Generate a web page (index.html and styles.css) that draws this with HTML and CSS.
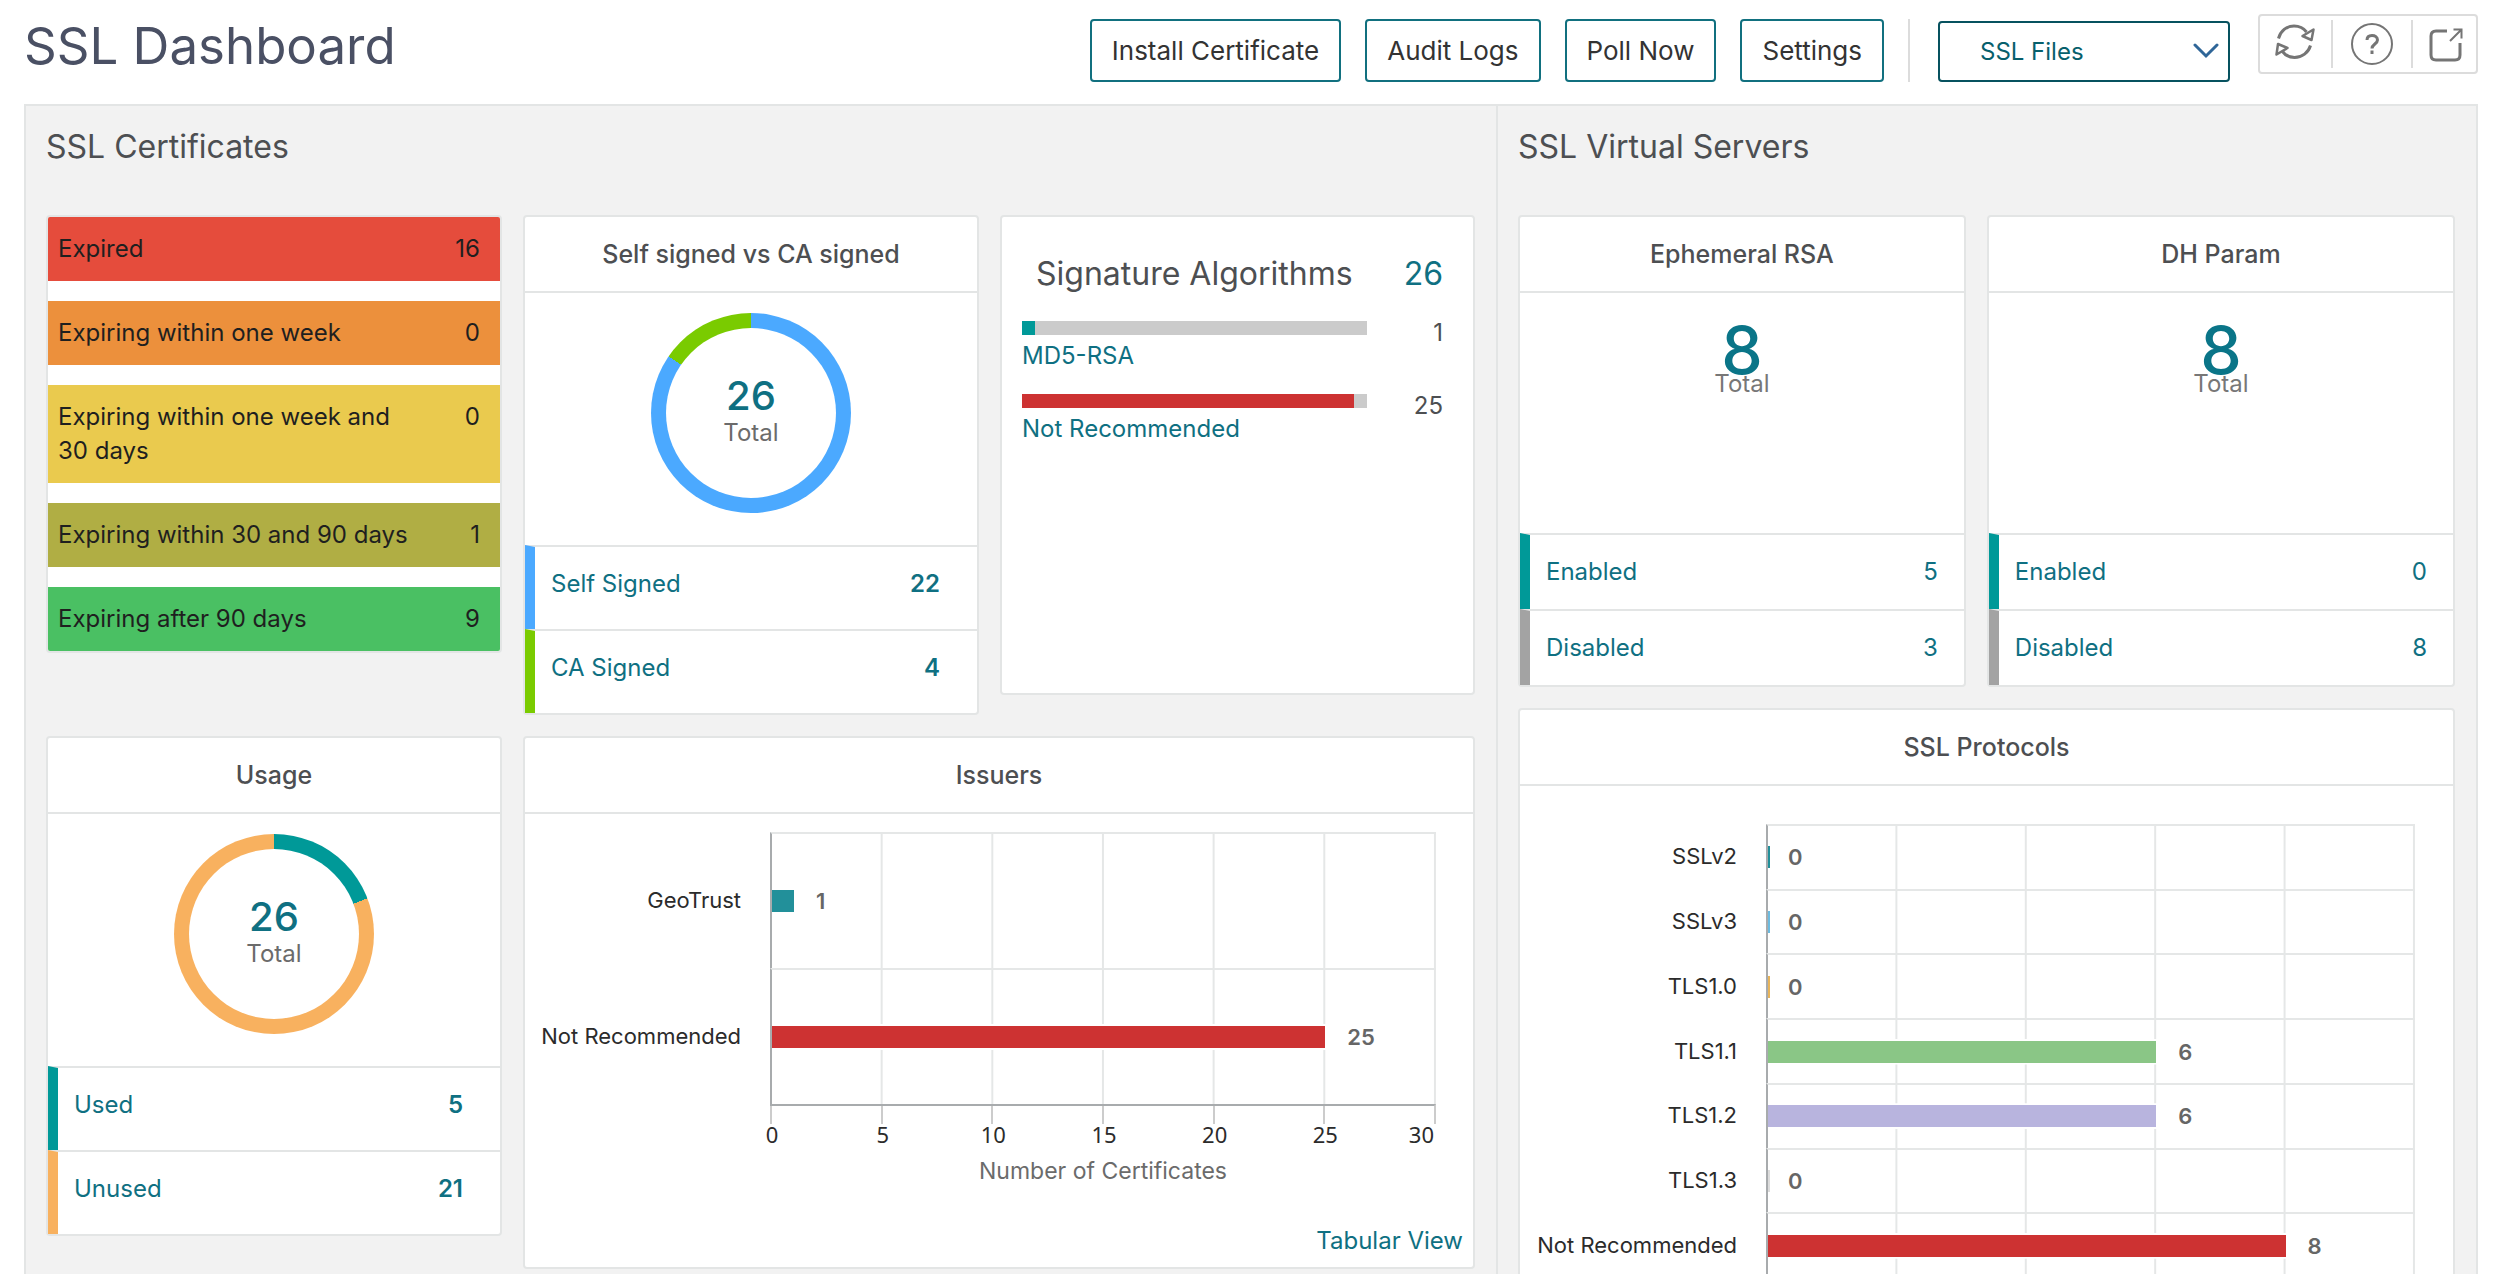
FILE: index.html
```html
<!DOCTYPE html>
<html lang="en">
<head>
    <meta charset="UTF-8">
    <meta name="viewport" content="width=device-width, initial-scale=1.0">
    <title>SSL Dashboard</title>
    <link rel="stylesheet" href="styles.css">
</head>
<body>

<div class="page">
    <header class="top-bar">
        <h1>SSL Dashboard</h1>
        <div class="actions">
            <button class="btn" type="button">Install Certificate</button>
            <button class="btn" type="button">Audit Logs</button>
            <button class="btn" type="button">Poll Now</button>
            <button class="btn" type="button">Settings</button>
        </div>
        <div class="file-picker">
            <select class="file-select" aria-label="SSL Files">
                <option>SSL Files</option>
            </select>
            <svg class="chevron" viewBox="0 0 26 16" aria-hidden="true">
                <path d="M2 2l11 11L24 2" fill="none" stroke="#2f6698" stroke-width="3" stroke-linecap="round"/>
            </svg>
        </div>
        <div class="icon-bar">
            <button class="refresh" type="button" aria-label="Refresh">
                <svg viewBox="0 0 42 42" fill="none" stroke="#757575" stroke-width="3">
                    <path d="M4.5 15.5C6.5 8 12.500 3 20 3c5 0 9.500 2 12.500 6"/>
                    <path d="M39.500 6.500l-2 10.500-9-4z" stroke-width="2.500" stroke-linejoin="round"/>
                    <path d="M36.500 22.500c-2 7-8.500 12-16 12-5 0-9-2-12-6"/>
                    <path d="M2.500 31.500l1.500-10.500 9.500 4z" stroke-width="2.500" stroke-linejoin="round"/>
                </svg>
            </button>
            <button class="help" type="button" aria-label="Help">
                <svg viewBox="0 0 42 42" fill="none" stroke="#757575" stroke-width="3">
                    <circle cx="21" cy="21" r="20" stroke-width="2"/>
                    <path d="M16 17c0-3 2-4.500 5-4.500s5.500 1.500 5.500 4.500c0 4-5.500 4-5.500 8.500"/>
                    <path d="M21 27.500v3.500"/>
                </svg>
            </button>
            <button class="popout" type="button" aria-label="Open in new window">
                <svg viewBox="0 0 42 42" fill="none" stroke="#757575" stroke-width="3">
                    <path d="M23 8H12q-5 0-5 5v19q0 5 5 5h19q5 0 5-5V20"/>
                    <path d="M26 18L37.500 6.500M29.500 6.500h8V15.500" stroke-width="2"/>
                </svg>
            </button>
        </div>
    </header>

    <main class="panel">
        <section class="section">
            <h2>SSL Certificates</h2>
            <div class="cards cert-cards">
                <ul class="card expiry">
                    <li class="expired"><span>Expired</span><span>16</span></li>
                    <li class="week"><span>Expiring within one week</span><span>0</span></li>
                    <li class="month"><span>Expiring within one week and 30 days</span><span>0</span></li>
                    <li class="quarter"><span>Expiring within 30 and 90 days</span><span>1</span></li>
                    <li class="later"><span>Expiring after 90 days</span><span>9</span></li>
                </ul>

                <article class="card">
                    <h3>Self signed vs CA signed</h3>
                    <div class="donut-box">
                        <div class="donut signed"><div class="donut-hole"><strong>26</strong><span>Total</span></div></div>
                    </div>
                    <ul class="legend tall">
                        <li class="blue"><a href="#">Self Signed</a><b>22</b></li>
                        <li class="lime"><a href="#">CA Signed</a><b>4</b></li>
                    </ul>
                </article>

                <article class="card algorithms">
                    <div class="algo-head"><span>Signature Algorithms</span><span class="algo-total">26</span></div>
                    <div class="algo">
                        <div class="algo-bar"><div class="teal-fill" style="width: 3.85%"></div></div>
                        <span class="algo-count">1</span>
                        <a href="#">MD5-RSA</a>
                    </div>
                    <div class="algo">
                        <div class="algo-bar"><div class="red-fill" style="width: 96.15%"></div></div>
                        <span class="algo-count">25</span>
                        <a href="#">Not Recommended</a>
                    </div>
                </article>

                <article class="card">
                    <h3>Usage</h3>
                    <div class="donut-box">
                        <div class="donut usage"><div class="donut-hole"><strong>26</strong><span>Total</span></div></div>
                    </div>
                    <ul class="legend tall">
                        <li class="teal"><a href="#">Used</a><b>5</b></li>
                        <li class="orange"><a href="#">Unused</a><b>21</b></li>
                    </ul>
                </article>

                <article class="card wide">
                    <h3>Issuers</h3>
                    <div class="chart issuers">
                        <div class="chart-row">
                            <span class="chart-label">GeoTrust</span>
                            <div class="track"><div class="bar issuer-fill" style="width: 3.33%"></div><span class="value">1</span></div>
                        </div>
                        <div class="chart-row">
                            <span class="chart-label">Not Recommended</span>
                            <div class="track"><div class="bar red-fill" style="width: 83.33%"></div><span class="value">25</span></div>
                        </div>
                        <div class="axis">
                            <div><span>0</span></div>
                            <div><span>5</span></div>
                            <div><span>10</span></div>
                            <div><span>15</span></div>
                            <div><span>20</span></div>
                            <div class="last-tick"><span>25</span><span class="axis-end">30</span></div>
                        </div>
                        <p class="axis-title">Number of Certificates</p>
                    </div>
                    <a class="tabular" href="#">Tabular View</a>
                </article>
            </div>
        </section>

        <section class="section servers">
            <h2>SSL Virtual Servers</h2>
            <div class="cards server-cards">
                <article class="card">
                    <h3>Ephemeral RSA</h3>
                    <div class="total-box"><strong>8</strong><span>Total</span></div>
                    <ul class="legend">
                        <li class="teal"><a href="#">Enabled</a><span>5</span></li>
                        <li class="gray"><a href="#">Disabled</a><span>3</span></li>
                    </ul>
                </article>
                <article class="card">
                    <h3>DH Param</h3>
                    <div class="total-box"><strong>8</strong><span>Total</span></div>
                    <ul class="legend">
                        <li class="teal"><a href="#">Enabled</a><span>0</span></li>
                        <li class="gray"><a href="#">Disabled</a><span>8</span></li>
                    </ul>
                </article>
                <article class="card wide">
                    <h3>SSL Protocols</h3>
                    <div class="chart protocols">
                        <div class="chart-row">
                            <span class="chart-label">SSLv2</span>
                            <div class="track"><div class="bar empty issuer-fill"></div><span class="value">0</span></div>
                        </div>
                        <div class="chart-row">
                            <span class="chart-label">SSLv3</span>
                            <div class="track"><div class="bar empty sky-fill"></div><span class="value">0</span></div>
                        </div>
                        <div class="chart-row">
                            <span class="chart-label">TLS1.0</span>
                            <div class="track"><div class="bar empty sand-fill"></div><span class="value">0</span></div>
                        </div>
                        <div class="chart-row">
                            <span class="chart-label">TLS1.1</span>
                            <div class="track"><div class="bar green-fill" style="width: 60%"></div><span class="value">6</span></div>
                        </div>
                        <div class="chart-row">
                            <span class="chart-label">TLS1.2</span>
                            <div class="track"><div class="bar violet-fill" style="width: 60%"></div><span class="value">6</span></div>
                        </div>
                        <div class="chart-row">
                            <span class="chart-label">TLS1.3</span>
                            <div class="track"><div class="bar empty pale-fill"></div><span class="value">0</span></div>
                        </div>
                        <div class="chart-row">
                            <span class="chart-label">Not Recommended</span>
                            <div class="track"><div class="bar red-fill" style="width: 80%"></div><span class="value">8</span></div>
                        </div>
                    </div>
                </article>
            </div>
        </section>
    </main>
</div>

</body>
</html>
```
FILE: styles.css
```css
* {
    box-sizing: border-box;
}
body {
    margin: 0;
    background: #fff;
    color: #4d4f52;
    font-family: Inter, "Liberation Sans", Arial, sans-serif;
    font-size: 24px;
    line-height: 34px;
}
h1, h2, h3, p, ul {
    margin: 0;
    padding: 0;
    font-weight: 400;
}
ul {
    list-style: none;
}
a {
    color: #0f7082;
    text-decoration: none;
}
a:hover {
    text-decoration: underline;
}
.page {
    height: 100vh;
    padding: 0 22px 0 24px;
    overflow: hidden;
}

/* top bar */
.top-bar {
    display: flex;
    align-items: flex-start;
    height: 104px;
}
.top-bar h1 {
    margin-right: auto;
    padding-top: 14px;
    color: #4a5064;
    font-size: 51px;
    line-height: 64px;
}
.actions {
    display: flex;
    gap: 24px;
    margin-top: 19px;
    padding-right: 24px;
    border-right: 2px solid #dcdcdc;
}
.btn {
    height: 63px;
    padding: 0 20px;
    background: #fff;
    border: 2px solid #11707f;
    border-radius: 4px;
    color: #333;
    font-family: inherit;
    font-size: 26px;
    cursor: pointer;
}
.file-picker {
    position: relative;
    margin: 21px 28px 0;
}
.file-select {
    width: 292px;
    height: 61px;
    padding: 0 40px;
    appearance: none;
    background: #fff;
    border: 2px solid #07525f;
    border-radius: 4px;
    color: #07606c;
    font-family: inherit;
    font-size: 24px;
}
.chevron {
    position: absolute;
    top: 22px;
    right: 11px;
    width: 26px;
    height: 16px;
    pointer-events: none;
}
.icon-bar {
    display: flex;
    align-items: center;
    width: 220px;
    height: 60px;
    margin-top: 14px;
    border: 2px solid #dcdcdc;
    border-radius: 4px;
}
.icon-bar button {
    display: flex;
    align-items: center;
    justify-content: center;
    height: 48px;
    padding: 0;
    background: none;
    border: 0;
    cursor: pointer;
}
.icon-bar button + button {
    border-left: 2px solid #dcdcdc;
}
.icon-bar .refresh {
    flex: 9;
}
.icon-bar .help {
    flex: 10;
}
.icon-bar .popout {
    flex: 8;
}
.icon-bar svg {
    width: 42px;
    height: 42px;
}

/* sections */
.panel {
    display: grid;
    grid-template-columns: 3fr 2fr;
    min-height: 1300px;
    background: #f2f2f2;
    border: 2px solid #e3e5e5;
}
.section {
    padding: 21px 21px 20px 20px;
}
.servers {
    border-left: 2px solid #e3e5e5;
}
.section h2 {
    margin-bottom: 48px;
    font-size: 32px;
    line-height: 40px;
}
.cards {
    display: grid;
    gap: 21px;
    align-items: start;
}
.cert-cards {
    grid-template-columns: 24fr 24fr 25fr;
}
.server-cards {
    grid-template-columns: 22fr 23fr;
}
.card {
    background: #fff;
    border: 2px solid #e3e5e5;
    border-radius: 4px;
}
.card h3 {
    height: 76px;
    border-bottom: 2px solid #e3e5e5;
    font-size: 25px;
    font-weight: 500;
    line-height: 74px;
    text-align: center;
}
.wide {
    grid-column: span 2;
}

/* expiry list */
.expiry {
    display: grid;
    gap: 20px;
    overflow: hidden;
}
.expiry li {
    display: flex;
    justify-content: space-between;
    gap: 60px;
    padding: 15px 20px 15px 10px;
    color: #1f1f1f;
}
.expired {
    background: #e54c3c;
}
.week {
    background: #ec903c;
}
.month {
    background: #eaca4e;
}
.quarter {
    background: #b0ae44;
}
.later {
    background: #4ac063;
}

/* donuts and totals */
.donut-box {
    padding: 20px 0 32px;
}
.donut {
    width: 200px;
    height: 200px;
    margin: 0 auto;
    padding: 15px;
    border-radius: 50%;
}
.signed {
    background: conic-gradient(#4ba9ff 0 84.6%, #7acb00 84.6%);
}
.usage {
    background: conic-gradient(#009998 0 19.2%, #f8b15f 19.2%);
}
.donut-hole {
    display: flex;
    flex-direction: column;
    align-items: center;
    justify-content: center;
    height: 100%;
    background: #fff;
    border-radius: 50%;
    color: #6b6b6b;
}
.donut-hole strong {
    color: #0f7082;
    font-size: 40px;
    font-weight: 500;
    line-height: 40px;
}
.total-box {
    display: flex;
    flex-direction: column;
    align-items: center;
    height: 240px;
    padding-top: 40px;
    color: #777;
}
.total-box strong {
    color: #0a7588;
    font-size: 66px;
    font-weight: 500;
    line-height: 34px;
}

/* legend rows */
.legend li {
    display: flex;
    justify-content: space-between;
    height: 76px;
    padding: 20px 26px 0 16px;
    border-top: 2px solid #e3e5e5;
    border-left: 10px solid;
}
.legend.tall li {
    height: 84px;
    padding-right: 37px;
}
.legend b,
.legend span {
    color: #0f7082;
}
.legend b {
    font-weight: 600;
}
.legend .blue {
    border-left-color: #4ba9ff;
}
.legend .lime {
    border-left-color: #7acb00;
}
.legend .teal {
    border-left-color: #009998;
}
.legend .orange {
    border-left-color: #f8b15f;
}
.legend .gray {
    border-left-color: #a3a3a3;
}

/* signature algorithms */
.algorithms {
    min-height: 480px;
    padding: 37px 30px 0 20px;
}
.algo-head {
    display: flex;
    justify-content: space-between;
    margin-bottom: 27px;
    padding-left: 14px;
    font-size: 32px;
    line-height: 40px;
}
.algo-total {
    color: #0f7082;
}
.algo {
    display: grid;
    grid-template-columns: 1fr 76px;
    grid-template-rows: 14px 1fr;
    height: 73px;
}
.algo-bar {
    background: #cbcbcb;
}
.algo-bar div {
    height: 100%;
}
.algo-count {
    grid-row: span 2;
    padding-top: 2px;
    line-height: 20px;
    text-align: right;
}
.algo a {
    margin-top: 4px;
}

/* bar charts */
.chart {
    font-size: 22px;
}
.chart-row {
    display: flex;
    align-items: stretch;
}
.chart-label {
    flex: none;
    display: flex;
    align-items: center;
    justify-content: flex-end;
    color: #2b2b2b;
    white-space: nowrap;
}
.track {
    display: flex;
    flex: 1;
    align-items: center;
    margin-left: 29px;
    border-top: 2px solid #e5e7e7;
    border-left: 2px solid #a8abad;
    background-image: linear-gradient(to right, transparent calc(100% - 2px), #e5e7e7 0);
}
.bar {
    flex: none;
    height: 22px;
    outline: 2px solid #fff;
    clip-path: inset(-2px -2px -2px 0);
}
.bar.empty {
    width: 2px;
    margin-right: -4px;
}
.value {
    margin-left: 22px;
    color: #666;
    font-weight: 600;
}
.issuers {
    padding: 18px 37px 0 14px;
}
.issuers .chart-row {
    height: 136px;
}
.issuers .chart-label {
    width: 202px;
}
.issuers .track {
    background-size: calc(100% / 6) 100%;
}
.axis {
    display: flex;
    margin-left: 231px;
    border-top: 2px solid #a8abad;
    border-right: 2px solid #ccc;
    height: 20px;
}
.axis div {
    flex: 1;
    height: 18px;
    border-left: 2px solid #ccc;
}
.axis span {
    display: block;
    width: 40px;
    margin: 11px 0 0 -20px;
    color: #2b2b2b;
    font-family: "Noto Sans", sans-serif;
    font-size: 22px;
    text-align: center;
}
.axis .last-tick {
    display: flex;
    justify-content: space-between;
}
.axis .axis-end {
    margin-left: 0;
    text-align: right;
}
.axis-title {
    margin: 30px 0 0 231px;
    color: #6b6b6b;
    font-size: 23px;
    text-align: center;
}
.tabular {
    display: block;
    padding: 36px 10px 9px;
    text-align: right;
}
.protocols {
    display: flex;
    flex-direction: column;
    height: 491px;
    padding: 38px 38px 0 19px;
}
.protocols .chart-row {
    flex: 1;
}
.protocols .chart-label {
    width: 198px;
}
.protocols .track {
    background-size: 20% 100%;
}
.issuer-fill {
    background: #22909a;
}
.teal-fill {
    background: #009998;
}
.red-fill {
    background: #cd3232;
}
.sky-fill {
    background: #6cbbe0;
}
.sand-fill {
    background: #e8b45a;
}
.green-fill {
    background: #8ac686;
}
.violet-fill {
    background: #b8b4de;
}
.pale-fill {
    background: #dcdcdc;
}
```
